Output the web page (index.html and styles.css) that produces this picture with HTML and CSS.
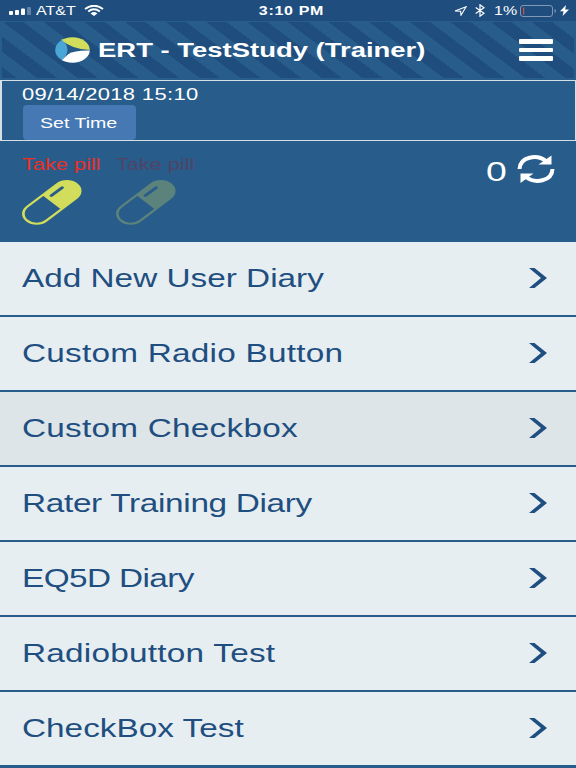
FILE: index.html
```html
<!DOCTYPE html>
<html lang="en">
<head>
    <meta charset="UTF-8">
    <meta name="viewport" content="width=device-width, initial-scale=1.0">
    <title>ERT - TestStudy (Trainer)</title>
    <link rel="stylesheet" href="styles.css">
</head>
<body>
    <div class="status-bar">
        <div class="status-left">
            <svg class="signal" width="22" height="8" viewBox="0 0 22 8" fill="#fff">
                <rect x="0" y="4" width="4" height="4" rx="1"/>
                <rect x="6" y="3" width="4" height="5" rx="1"/>
                <rect x="12" y="1.5" width="4" height="6.5" rx="1"/>
                <rect x="18" y="0" width="4" height="8" rx="1" opacity="0.3"/>
            </svg>
            <span class="wide carrier">AT&amp;T</span>
            <svg class="wifi" width="20" height="11" viewBox="0 0 20 11">
                <path d="M1 4Q10 -2.5 19 4" fill="none" stroke="#fff" stroke-width="2"/>
                <path d="M4.2 6.5Q10 2 15.8 6.5" fill="none" stroke="#fff" stroke-width="2"/>
                <path d="M6.6 8.4Q10 5.6 13.4 8.4L10 11Z" fill="#fff"/>
            </svg>
        </div>
        <span class="wide clock">3:10 PM</span>
        <div class="status-right">
            <svg width="13" height="10" viewBox="0 0 13 10">
                <path d="M1 5L12 .8L7 9.2L6.6 5.2Z" fill="none" stroke="#fff" stroke-width="1.1"/>
            </svg>
            <svg class="bluetooth" width="10" height="13" viewBox="0 0 10 13">
                <path d="M.7 3.6L9 9.3L5 12.2V.8L9 3.7L.7 9.4" fill="none" stroke="#fff" stroke-width="1.2"/>
            </svg>
            <span class="wide percent">1%</span>
            <svg class="battery" width="37" height="12" viewBox="0 0 37 12">
                <rect x=".5" y=".5" width="32" height="11" rx="2.5" fill="none" stroke="#8199b4"/>
                <rect x="3" y="2.5" width="1.2" height="7" fill="#e34b43"/>
                <path d="M34.5 4V8Q36 7.5 36 6T34.5 4Z" fill="#8199b4"/>
            </svg>
            <svg class="bolt" width="9" height="11" viewBox="0 0 9 11">
                <path d="M6 0L0 6.2H3.6L2.6 11L9 4.5H5.2Z" fill="#fff"/>
            </svg>
        </div>
    </div>

    <header class="header">
        <svg class="logo" width="35" height="26" viewBox="0 0 35 26">
            <defs>
                <clipPath id="oval"><ellipse cx="17.5" cy="13" rx="17.3" ry="12.8"/></clipPath>
            </defs>
            <g clip-path="url(#oval)">
                <rect width="35" height="26" fill="#24598a"/>
                <path d="M0 0H6Q12.500 7 12.500 13.500Q12 19 6 24V26H0Z" fill="#49a6d5"/>
                <path d="M6 2.500V-1H35V13Q17 12.500 6 2.500Z" fill="#d2dd5b"/>
                <path d="M35 13.500Q19 13.200 13.500 17Q10.500 19.500 6.500 23.500V26H35Z" fill="#fff"/>
            </g>
        </svg>
        <h1 class="wide">ERT - TestStudy (Trainer)</h1>
        <div class="menu">
            <i></i>
            <i></i>
            <i></i>
        </div>
    </header>

    <section class="time-panel">
        <div class="wide datetime">09/14/2018 15:10</div>
        <button type="button" class="set-time"><span class="wide">Set Time</span></button>
    </section>

    <section class="tasks">
        <div class="task">
            <span class="wide">Take pill</span>
            <svg width="60" height="45" viewBox="0 0 60 45">
                <use href="#pill"/>
            </svg>
        </div>
        <div class="task disabled">
            <span class="wide">Take pill</span>
            <svg width="60" height="45" viewBox="0 0 60 45">
                <use href="#pill"/>
            </svg>
        </div>
        <div class="sync">
            <span class="wide count">0</span>
            <svg width="38" height="29" viewBox="0 0 38 29">
                <path d="M2.5 14C3 1.500 20-1 29 6" fill="none" stroke="#fff" stroke-width="4"/>
                <path d="M34.5 .5V9.500H21.5Z" fill="#fff"/>
                <path d="M35.5 14C35 26.500 18 29 9 22" fill="none" stroke="#fff" stroke-width="4"/>
                <path d="M3.500 28V18.500H16.500Z" fill="#fff"/>
            </svg>
        </div>
    </section>

    <ul class="diary-list">
        <li><span class="wide">Add New User Diary</span><svg width="18" height="20" viewBox="0 0 18 20"><use href="#chevron"/></svg></li>
        <li><span class="wide loose">Custom Radio Button</span><svg width="18" height="20" viewBox="0 0 18 20"><use href="#chevron"/></svg></li>
        <li class="active"><span class="wide loose">Custom Checkbox</span><svg width="18" height="20" viewBox="0 0 18 20"><use href="#chevron"/></svg></li>
        <li><span class="wide tight">Rater Training Diary</span><svg width="18" height="20" viewBox="0 0 18 20"><use href="#chevron"/></svg></li>
        <li><span class="wide tighter">EQ5D Diary</span><svg width="18" height="20" viewBox="0 0 18 20"><use href="#chevron"/></svg></li>
        <li><span class="wide loose">Radiobutton Test</span><svg width="18" height="20" viewBox="0 0 18 20"><use href="#chevron"/></svg></li>
        <li><span class="wide">CheckBox Test</span><svg width="18" height="20" viewBox="0 0 18 20"><use href="#chevron"/></svg></li>
    </ul>

    <!-- shared icons -->
    <svg width="0" height="0" class="icons">
        <defs>
            <g id="pill" transform="translate(29.800 22.400) scale(1.333 1) rotate(-45)">
                <rect x="-26" y="-10" width="52" height="20" rx="10" fill="none" stroke="#d2dd5b" stroke-width="2"/>
                <path d="M0 -10H16.500A10 10 0 0 1 16.500 10H0Z" fill="#d2dd5b"/>
                <path d="M4.500 -5H16" stroke="#285c8a" stroke-width="2.600" stroke-linecap="round"/>
            </g>
            <path id="chevron" d="M0 0H5.500L18 10L5.500 20H0L12 10Z" fill="#1f4e80"/>
        </defs>
    </svg>
</body>
</html>
```

FILE: styles.css
```css
* {
    box-sizing: border-box;
}

body {
    font-family: "Liberation Sans", Arial, sans-serif;
    background: #285c8a;
    margin: 0;
    height: 768px;
    overflow: hidden;
    color: #fff;
}

svg {
    display: block;
    flex: none;
}

/* extended letterforms */
.wide {
    display: block;
    width: fit-content;
    white-space: nowrap;
    transform: scaleX(1.333);
    transform-origin: left center;
}

.status-bar {
    display: grid;
    grid-template-columns: 1fr auto 1fr;
    align-items: center;
    height: 21px;
    padding: 0 7px 0 9px;
    background: #1f4e7e;
    font-size: 12px;
}

.status-left,
.status-right {
    display: flex;
    align-items: center;
}

.status-right {
    justify-content: flex-end;
}

.carrier {
    width: 41px;
    margin: 0 7px 0 5px;
}

.clock {
    transform-origin: center;
    font-weight: bold;
    letter-spacing: 0.5px;
    position: relative;
    left: 2px;
}

.bluetooth {
    margin: 0 9px 0 8px;
}

.percent {
    width: 22px;
    margin-right: 4px;
}

.bolt {
    margin-left: 3px;
}

.header {
    display: flex;
    align-items: center;
    height: 59px;
    padding: 0 21px 0 53px;
    border: 2px solid #285c8a;
    border-top-width: 1px;
    background: repeating-linear-gradient(36.87deg, #1f4e7e 0, #1f4e7e 8.800px, #285c8a 8.800px, #285c8a 21px, #1f4e7e 21px, #1f4e7e 24.400px);
}

.header h1 {
    margin: 0 0 0 8px;
    font-size: 20.600px;
    line-height: 24px;
}

.menu {
    display: flex;
    flex-direction: column;
    gap: 4px;
    margin-left: auto;
}

.menu i {
    width: 34px;
    height: 4.500px;
    border-radius: 1px;
    background: #fff;
}

.time-panel {
    height: 61px;
    border: 1px solid #d5dfe7;
    border-left-width: 2px;
    padding: 3px 0 0 20px;
}

.datetime {
    font-size: 16.500px;
    letter-spacing: 0.25px;
    line-height: 20px;
}

.set-time {
    display: block;
    width: 113px;
    height: 35px;
    margin: 1px 0 0 1px;
    padding: 0 0 0 17px;
    border: 0;
    border-radius: 4px;
    background: #4678b4;
    color: #fff;
    font: 14.700px "Liberation Sans", Arial, sans-serif;
    text-align: left;
}

.tasks {
    display: flex;
    height: 101px;
    padding: 13px 21px 0 22px;
}

.task {
    width: 94px;
    color: #ee2e24;
    font-size: 16.300px;
    line-height: 20px;
}

.task svg {
    margin-top: 6px;
}

.disabled {
    opacity: 0.3;
    color: #aa0c16;
}

.sync {
    display: flex;
    align-items: center;
    height: 30px;
    margin-left: auto;
}

.count {
    width: 31px;
    padding-top: 5px;
    font-size: 28px;
}

.diary-list {
    margin: 0;
    padding: 0;
    list-style: none;
}

.diary-list li {
    display: flex;
    align-items: center;
    justify-content: space-between;
    height: 75px;
    padding: 0 29px 1px 22px;
    border-bottom: 2px solid #285c8a;
    background: #e7eef2;
    color: #1f4e80;
    font-size: 25px;
}

.diary-list .active {
    background: #dde5e8;
}

.loose {
    letter-spacing: 0.18px;
}

.tight {
    letter-spacing: -0.24px;
}

.tighter {
    letter-spacing: -0.45px;
}

.icons {
    position: absolute;
}
```
